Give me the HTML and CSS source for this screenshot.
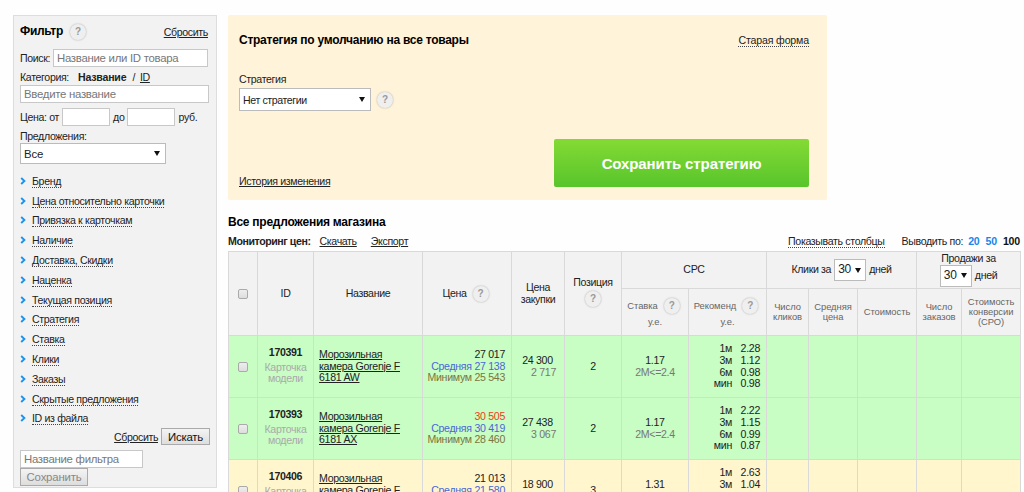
FILE: index.html
```html
<!DOCTYPE html>
<html lang="ru">
<head>
  <meta charset="UTF-8" />
  <title>Все предложения магазина</title>
  <link rel="stylesheet" href="styles.css">
</head>
<body>

  <div class="page">
    <aside class="filter">
      <div class="filter-head">
        <h2>Фильтр</h2>
        <span class="help">?</span>
        <a href="#" class="reset">Сбросить</a>
      </div>
      <div class="row search">
        <label>Поиск:</label>
        <input type="text" placeholder="Название или ID товара">
      </div>
      <div class="row category">
        <span>Категория:</span> <b>Название</b> <span>/</span> <a href="#">ID</a>
      </div>
      <input type="text" class="category-input" placeholder="Введите название">
      <div class="row price-range">
        <span>Цена: от</span><input type="text"><span>до</span><input type="text"><span>руб.</span>
      </div>
      <div class="row offers-label">Предложения:</div>
      <div class="select select-all"><span>Все</span><i class="arrow"></i></div>

      <ul class="groups">
        <li><svg viewBox="0 0 6 8"><path d="M1.2 1 4.4 4 1.2 7"/></svg><a href="#">Бренд</a></li>
        <li><svg viewBox="0 0 6 8"><path d="M1.2 1 4.4 4 1.2 7"/></svg><a href="#">Цена относительно карточки</a></li>
        <li><svg viewBox="0 0 6 8"><path d="M1.2 1 4.4 4 1.2 7"/></svg><a href="#">Привязка к карточкам</a></li>
        <li><svg viewBox="0 0 6 8"><path d="M1.2 1 4.4 4 1.2 7"/></svg><a href="#">Наличие</a></li>
        <li><svg viewBox="0 0 6 8"><path d="M1.2 1 4.4 4 1.2 7"/></svg><a href="#">Доставка, Скидки</a></li>
        <li><svg viewBox="0 0 6 8"><path d="M1.2 1 4.4 4 1.2 7"/></svg><a href="#">Наценка</a></li>
        <li><svg viewBox="0 0 6 8"><path d="M1.2 1 4.4 4 1.2 7"/></svg><a href="#">Текущая позиция</a></li>
        <li><svg viewBox="0 0 6 8"><path d="M1.2 1 4.4 4 1.2 7"/></svg><a href="#">Стратегия</a></li>
        <li><svg viewBox="0 0 6 8"><path d="M1.2 1 4.4 4 1.2 7"/></svg><a href="#">Ставка</a></li>
        <li><svg viewBox="0 0 6 8"><path d="M1.2 1 4.4 4 1.2 7"/></svg><a href="#">Клики</a></li>
        <li><svg viewBox="0 0 6 8"><path d="M1.2 1 4.4 4 1.2 7"/></svg><a href="#">Заказы</a></li>
        <li><svg viewBox="0 0 6 8"><path d="M1.2 1 4.4 4 1.2 7"/></svg><a href="#">Скрытые предложения</a></li>
        <li><svg viewBox="0 0 6 8"><path d="M1.2 1 4.4 4 1.2 7"/></svg><a href="#">ID из файла</a></li>
      </ul>

      <div class="filter-actions">
        <a href="#">Сбросить</a>
        <button class="btn">Искать</button>
      </div>
      <input type="text" class="filter-name" placeholder="Название фильтра">
      <button class="btn btn-save" disabled>Сохранить</button>
    </aside>

    <main>
      <section class="strategy">
        <div class="strategy-head">
          <h2>Стратегия по умолчанию на все товары</h2>
          <a href="#" class="dashed">Старая форма</a>
        </div>
        <label>Стратегия</label>
        <div class="strategy-choice">
          <div class="select select-strategy"><span>Нет стратегии</span><i class="arrow"></i></div>
          <span class="help">?</span>
        </div>
        <div class="strategy-foot">
          <a href="#" class="history">История изменения</a>
          <button class="btn-green">Сохранить стратегию</button>
        </div>
      </section>

      <h2 class="title">Все предложения магазина</h2>
      <div class="toolbar">
        <b>Мониторинг цен:</b>
        <a href="#" class="download">Скачать</a>
        <a href="#" class="export">Экспорт</a>
        <a href="#" class="dashed columns">Показывать столбцы</a>
        <span class="per-page">Выводить по:</span>
        <a href="#" class="num">20</a>
        <a href="#" class="num">50</a>
        <b class="num">100</b>
      </div>

      <table>
        <colgroup>
          <col class="c-check"><col class="c-id"><col class="c-name"><col class="c-price"><col class="c-buy">
          <col class="c-pos"><col class="c-bid"><col class="c-rec"><col class="c-clicks"><col class="c-avg">
          <col class="c-cost"><col class="c-orders"><col class="c-cpo">
        </colgroup>
        <thead>
          <tr class="head-top">
            <th rowspan="2"><i class="check"></i></th>
            <th rowspan="2">ID</th>
            <th rowspan="2">Название</th>
            <th rowspan="2"><div class="with-help">Цена <span class="help">?</span></div></th>
            <th rowspan="2">Цена<br>закупки</th>
            <th rowspan="2"><div class="position">Позиция <span class="help">?</span></div></th>
            <th colspan="2">CPC</th>
            <th colspan="3">
              <div class="period">Клики за <span class="select select-days">30<i class="arrow"></i></span> дней</div>
            </th>
            <th colspan="2">
              <div class="sales">Продажи за</div>
              <div class="period"><span class="select select-days">30<i class="arrow"></i></span> дней</div>
            </th>
          </tr>
          <tr class="head-sub">
            <th><div class="with-help">Ставка <span class="help">?</span></div><div class="unit">у.е.</div></th>
            <th><div class="with-help">Рекоменд <span class="help">?</span></div><div class="unit">у.е.</div></th>
            <th>Число<br>кликов</th>
            <th>Средняя<br>цена</th>
            <th>Стоимость</th>
            <th>Число<br>заказов</th>
            <th>Стоимость<br>конверсии<br>(CPO)</th>
          </tr>
        </thead>
        <tbody>
          <tr class="green">
            <td><i class="check"></i></td>
            <td class="id"><b>170391</b><span>Карточка<br>модели</span></td>
            <td class="name"><a href="#">Морозильная<br>камера Gorenje F<br>6181 AW</a></td>
            <td class="price">27 017<br><span class="avg">Средняя 27 138</span><br><span class="min">Минимум 25 543</span></td>
            <td class="buy">24 300<span>2 717</span></td>
            <td>2</td>
            <td class="bid">1.17<span>2М&lt;=2.4</span></td>
            <td class="rec"><dl><dt>1м</dt><dd>2.28</dd><dt>3м</dt><dd>1.12</dd><dt>6м</dt><dd>0.98</dd><dt>мин</dt><dd>0.98</dd></dl></td>
            <td></td><td></td><td></td><td></td><td></td>
          </tr>
          <tr class="green">
            <td><i class="check"></i></td>
            <td class="id"><b>170393</b><span>Карточка<br>модели</span></td>
            <td class="name"><a href="#">Морозильная<br>камера Gorenje F<br>6181 AX</a></td>
            <td class="price"><span class="high">30 505</span><br><span class="avg">Средняя 30 419</span><br><span class="min">Минимум 28 460</span></td>
            <td class="buy">27 438<span>3 067</span></td>
            <td>2</td>
            <td class="bid">1.17<span>2М&lt;=2.4</span></td>
            <td class="rec"><dl><dt>1м</dt><dd>2.22</dd><dt>3м</dt><dd>1.15</dd><dt>6м</dt><dd>0.99</dd><dt>мин</dt><dd>0.87</dd></dl></td>
            <td></td><td></td><td></td><td></td><td></td>
          </tr>
          <tr class="yellow">
            <td><i class="check"></i></td>
            <td class="id"><b>170406</b><span>Карточка<br>&nbsp;</span></td>
            <td class="name"><a href="#">Морозильная<br>камера Gorenje F</a><br>&nbsp;</td>
            <td class="price">21 013<br><span class="avg">Средняя 21 580</span><br>&nbsp;</td>
            <td class="buy">18 900<span>&nbsp;</span></td>
            <td>3</td>
            <td class="bid">1.31<span>&nbsp;</span></td>
            <td class="rec"><dl><dt>1м</dt><dd>2.63</dd><dt>3м</dt><dd>1.04</dd><dt>&nbsp;</dt><dd></dd><dt>&nbsp;</dt><dd></dd></dl></td>
            <td></td><td></td><td></td><td></td><td></td>
          </tr>
        </tbody>
      </table>
    </main>
  </div>

</body>
</html>
```
FILE: styles.css
```css
* {
  box-sizing: border-box;
}

body {
  margin: 0;
  height: 492px;
  overflow: hidden;
  background: #fefefe;
  color: #222;
  font: 10.6px/12px "Liberation Sans", Arial, sans-serif;
  letter-spacing: -0.35px;
}

a {
  color: #222;
  text-underline-offset: 1px;
}

h2 {
  margin: 0;
  font-size: 12px;
  line-height: 14px;
  letter-spacing: -0.25px;
  color: #000;
}

input {
  display: block;
  border: 1px solid #c8c8c8;
  background: #fff;
  padding: 0 3px;
  font: 11.4px "Liberation Sans", Arial, sans-serif;
  letter-spacing: -0.28px;
}

input::placeholder {
  color: #777;
}

.page {
  display: flex;
  align-items: flex-start;
  padding: 15px 0 0 13px;
}

/* filter */

.filter {
  width: 204px;
  height: 473px;
  margin-right: 11px;
  padding: 0 7px 0 6px;
  border: 1px solid #ddd;
  background: #f2f2f2;
  flex: none;
}

.filter-head {
  display: flex;
  align-items: center;
  height: 31px;
}

.filter-head h2 {
  margin-top: -1px;
  letter-spacing: -0.3px;
}

.filter-head .help {
  margin-left: 7px;
}

.reset {
  margin-left: auto;
  margin-right: 1px;
  padding-top: 1px;
}

.help {
  display: inline-block;
  width: 16px;
  height: 16px;
  border-radius: 50%;
  background: #efefef;
  box-shadow: 0 0 2px rgba(0, 0, 0, 0.3);
  color: #999;
  font-weight: bold;
  font-size: 10px;
  line-height: 16px;
  letter-spacing: 0;
  text-align: center;
  flex: none;
}

.row {
  display: flex;
  align-items: center;
}

.search {
  margin-top: 2px;
  justify-content: space-between;
}

.search input {
  width: 155px;
  height: 18px;
  margin-right: 1px;
}

.category {
  height: 18px;
  padding-top: 2px;
}

.category b {
  margin: 0 6px 0 9px;
  letter-spacing: -0.2px;
}

.category a {
  margin-left: 5px;
}

.category-input {
  width: 189px;
  height: 18px;
}

.price-range {
  margin-top: 5px;
  height: 18px;
}

.price-range input {
  width: 48px;
  height: 18px;
  margin: 0 3px;
}

.offers-label {
  height: 17px;
  padding-top: 3px;
}

.select {
  display: flex;
  align-items: center;
  justify-content: space-between;
  border: 1px solid #bbb;
  background: #fff;
  color: #222;
}

.arrow {
  border: 3px solid transparent;
  border-top: 5px solid #111;
  border-bottom: 0;
}

.select-all {
  width: 146px;
  height: 21px;
  padding: 0 5px 0 3px;
  font-size: 11.4px;
  letter-spacing: -0.2px;
}

.groups {
  list-style: none;
  margin: 7px 0 0;
  padding: 0;
}

.groups li {
  display: flex;
  align-items: center;
  height: 19.8px;
}

.groups svg {
  width: 6px;
  height: 8px;
  margin-right: 6px;
  fill: none;
  stroke: #1a94f0;
  stroke-width: 1.9;
}

.groups a,
.dashed {
  text-decoration: none;
  border-bottom: 1px dotted #444;
}

.groups a {
  padding-top: 1px;
}

.filter-actions {
  display: flex;
  align-items: center;
  justify-content: flex-end;
  margin-right: -1px;
}

.filter-actions a {
  letter-spacing: -0.4px;
}

.btn {
  display: block;
  width: 49px;
  height: 17px;
  margin-left: 3px;
  padding: 0;
  border: 1px solid #aaa;
  background: linear-gradient(#f4f4f4, #ddd);
  color: #111;
  font: 11.4px/14px "Liberation Sans", Arial, sans-serif;
  letter-spacing: -0.2px;
}

.filter-name {
  width: 123px;
  height: 18px;
  margin-top: 5px;
}

.btn-save {
  width: 68px;
  height: 18px;
  margin: 0;
  color: #888;
}

/* default strategy */

main {
  width: 793px;
  flex: none;
}

.strategy {
  width: 599px;
  height: 185px;
  padding: 18px 18px 0 11px;
  border-radius: 2px;
  background: #fff3da;
}

.strategy-head {
  display: flex;
  justify-content: space-between;
  height: 40px;
}

.strategy-head .dashed {
  height: 13px;
  margin-top: 1px;
  letter-spacing: -0.15px;
}

.strategy label {
  display: block;
  height: 15px;
}

.strategy-choice {
  display: flex;
  align-items: center;
}

.strategy-choice .help {
  margin-left: 6px;
}

.select-strategy {
  width: 132px;
  height: 23px;
  padding: 0 5px 0 3px;
  letter-spacing: -0.4px;
}

.strategy-foot {
  display: flex;
  justify-content: space-between;
  align-items: flex-end;
  margin-top: 28px;
}

.btn-green {
  width: 255px;
  height: 48px;
  border: 0;
  border-radius: 2px;
  background: linear-gradient(#84da34, #58c52c);
  color: #fff;
  font: bold 15px "Liberation Sans", Arial, sans-serif;
  letter-spacing: -0.1px;
}

/* offers */

.title {
  margin-top: 15px;
}

.toolbar {
  display: flex;
  height: 22px;
  padding-top: 6px;
}

.toolbar b {
  letter-spacing: -0.42px;
}

.toolbar a {
  height: 13px;
}

.download {
  margin-left: 9px;
}

.export {
  margin-left: 14px;
}

.columns {
  margin-left: auto;
}

.per-page {
  margin: 0 5px 0 17px;
}

.toolbar .num {
  margin-right: 6px;
  font-weight: bold;
  letter-spacing: -0.2px;
  color: #1a86e8;
  text-decoration: none;
}

.toolbar b.num {
  margin-right: 1px;
  color: #111;
}

table {
  width: 793px;
  table-layout: fixed;
  border-collapse: collapse;
  line-height: 11.6px;
}

.c-check { width: 29px; }
.c-id { width: 56px; }
.c-name { width: 109px; }
.c-price { width: 89px; }
.c-buy { width: 53px; }
.c-pos { width: 57px; }
.c-bid { width: 67px; }
.c-rec { width: 78px; }
.c-clicks { width: 42px; }
.c-avg { width: 49px; }
.c-cost { width: 59px; }
.c-orders { width: 45px; }
.c-cpo { width: 59px; }

th,
td {
  padding: 0;
  border: 1px solid #d9d9d9;
  text-align: center;
  vertical-align: middle;
  font-weight: normal;
}

td {
  letter-spacing: -0.3px;
}

th {
  background: #f2f2f2;
}

.head-top {
  height: 37px;
}

.head-sub {
  height: 47px;
}

.head-sub th {
  color: #666;
  font-size: 9.4px;
  line-height: 9.8px;
  letter-spacing: -0.05px;
}

.with-help {
  display: flex;
  align-items: center;
  justify-content: center;
  gap: 6px;
  padding-right: 3px;
}

.position {
  display: flex;
  flex-direction: column;
  align-items: center;
  gap: 2px;
  margin-top: -3px;
}

.unit {
  margin-top: 3px;
}

.period {
  display: flex;
  align-items: center;
  justify-content: center;
  gap: 3px;
}

.select-days {
  width: 32px;
  height: 22px;
  padding: 0 4px 0 3px;
  font-size: 12px;
}

.check {
  display: block;
  width: 10px;
  height: 10px;
  margin: 0 auto;
  border: 1px solid #aaa;
  border-radius: 2px;
  background: linear-gradient(#eee, #ddd);
}

tbody tr {
  height: 62px;
}

.green {
  background: #c8fdc4;
}

.yellow {
  background: #fff6cd;
}

.id b,
.id span {
  display: block;
}

.id b {
  margin-top: -1px;
  letter-spacing: -0.35px;
}

.id span {
  margin-top: 3px;
  color: #aaa;
}

.name {
  padding-left: 5px;
  text-align: left;
}

.price {
  padding-right: 6px;
  text-align: right;
}

.avg {
  color: #4a67d6;
}

.min {
  color: #7d7440;
}

.high {
  color: #f33a1a;
}

.buy span,
.bid span {
  display: block;
  color: #777;
}

.buy {
  padding-right: 1px;
}

.buy span {
  padding-left: 12px;
}

.rec dl {
  display: grid;
  grid-template-columns: 1fr 28px;
  margin: 0;
  padding-right: 6px;
  text-align: right;
}

.rec dd {
  margin: 0;
}
```
